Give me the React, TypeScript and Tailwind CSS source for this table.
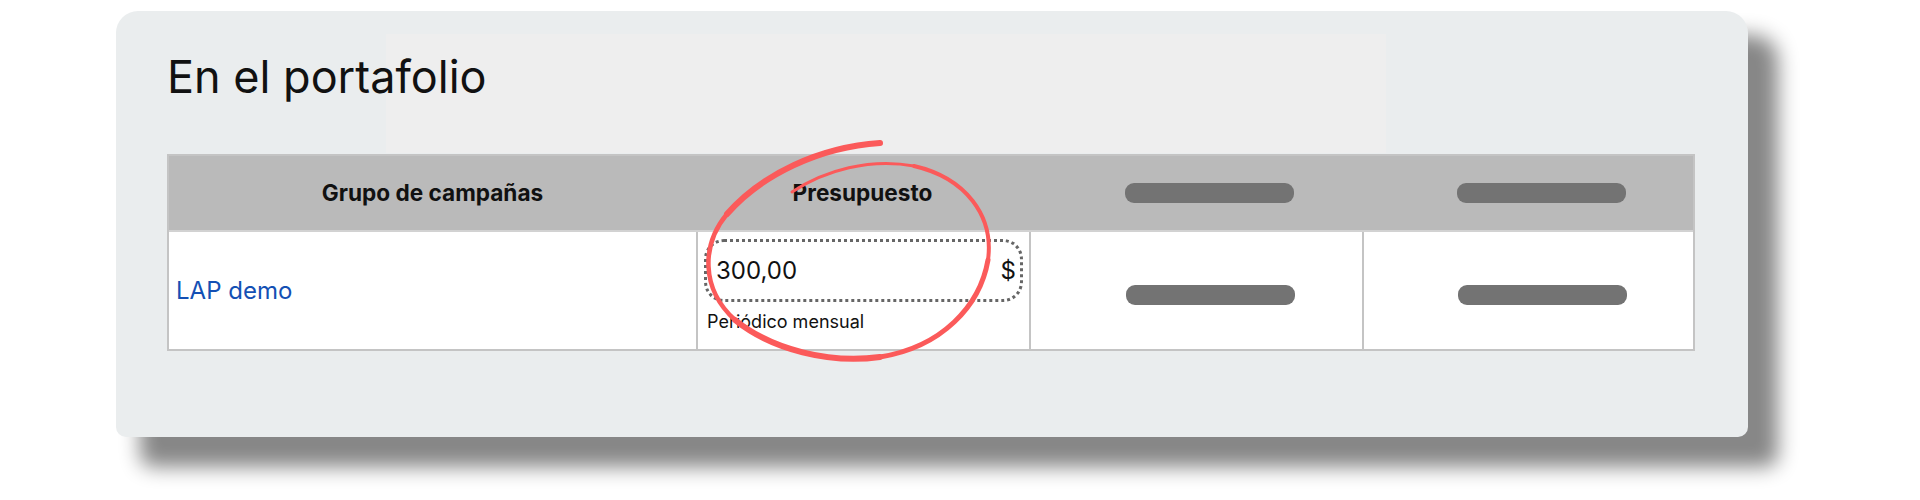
import React from 'react'

// hand-drawn red ring that sits over the budget cell
function RedRing() {
  return (
    <svg
      className="pointer-events-none absolute left-[-18px] top-[-102px] overflow-visible"
      width="330"
      height="280"
      viewBox="0 0 330 280"
      fill="none"
    >
      <g stroke="#fb5a5a" strokeLinecap="round" strokeLinejoin="round">
        <path d="M200,13 C140,17 82,44 47,84" strokeWidth="6" />
        <path d="M47,84 C22,114 20,158 55,190" strokeWidth="4.5" />
        <path d="M55,190 C92,220 150,234 200,227" strokeWidth="6" />
        <path d="M200,227 C262,217 300,176 308,130" strokeWidth="5" />
        <path d="M308,130 C314,86 286,48 234,36" strokeWidth="4" />
        <path d="M234,36 C190,28 145,40 112,62" strokeWidth="3" />
      </g>
    </svg>
  )
}

function Pill() {
  return <div className="h-[20px] w-[169px] rounded-[9px] bg-[#737373]" />
}

export default function App() {
  const cols = 'grid grid-cols-[527px_333px_333px_331px]'

  return (
    <div className="min-h-screen bg-white pl-[116px] pt-[11px] font-['Inter',sans-serif]">
      <div className="relative h-[426px] w-[1632px] rounded-t-[22px] rounded-b-[10px] bg-[#eaedee] px-[51px] pt-[43px] shadow-[27px_27px_20px_3px_#878787]">
        <div className="absolute left-[270px] top-[23px] h-[119px] w-[1000px] bg-[#eeeeee]" />

        <h1 className="relative text-[45px] leading-none text-[#111]">En el portafolio</h1>

        <div className="relative mt-[55px] w-[1528px] border-2 border-[#c4c4c4]">
          <div className={`${cols} h-[74px] items-center bg-[#bababa] text-[22.6px] font-bold text-[#111]`}>
            <div className="text-center">Grupo de campañas</div>
            <div className="text-center">Presupuesto</div>
            <div className="flex justify-center pl-[28px]">
              <Pill />
            </div>
            <div className="flex justify-center pl-[28px]">
              <Pill />
            </div>
          </div>

          <div className={`${cols} h-[119px] border-t-2 border-[#d2d2d2] bg-white`}>
            <div className="flex items-center pl-[7px] text-[24px] text-[#1450b4]">LAP demo</div>

            <div className="relative border-l-2 border-[#c4c4c4] px-[6px] pt-[7px]">
              <div className="flex h-[63px] items-center justify-between rounded-[20px] border-[3px] border-dotted border-[#666] pl-[9px] pr-[4px] text-[24px] text-[#111]">
                <span>300,00</span>
                <span>$</span>
              </div>
              <p className="mt-[11px] pl-[3px] text-[18px] leading-none text-[#111]">Periódico mensual</p>
              <RedRing />
            </div>

            <div className="flex items-center justify-center border-l-2 border-[#c4c4c4] pl-[28px]">
              <div className="mt-[8px]">
                <Pill />
              </div>
            </div>
            <div className="flex items-center justify-center border-l-2 border-[#c4c4c4] pl-[28px]">
              <div className="mt-[8px]">
                <Pill />
              </div>
            </div>
          </div>
        </div>
      </div>
    </div>
  )
}
